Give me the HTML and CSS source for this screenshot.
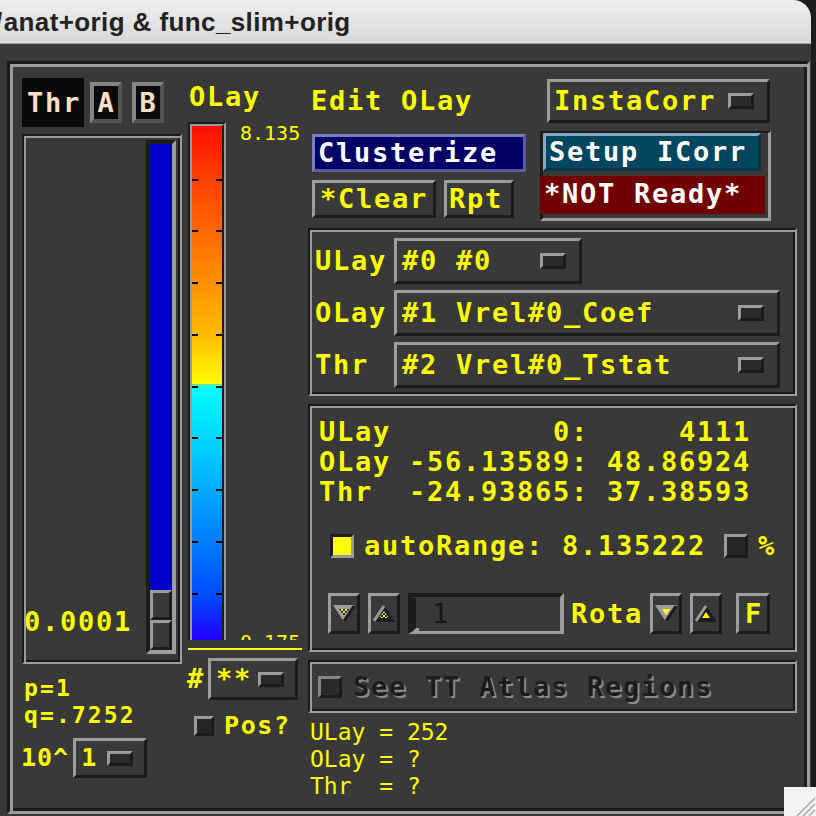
FILE: index.html
```html
<!DOCTYPE html>
<html>
<head>
<meta charset="utf-8">
<link rel="stylesheet" href="styles.css">
</head>
<body>
<div class="window">
  <div class="titlebar"><span class="cutchar">/</span>anat+orig &amp; func_slim+orig</div>
  <div class="frame">
    <div class="colA">
      <div class="thrrow">
        <div class="big thrbox">Thr</div>
        <div class="big ab ab-a">A</div>
        <div class="big ab ab-b">B</div>
      </div>
      <div class="etched2 slider">
        <div class="big thrval">0.0001</div>
        <div class="trough">
          <div class="fill"></div>
          <div class="thumb"></div>
          <div class="thumb"></div>
        </div>
      </div>
      <div class="pq"><div class="pqline">p=1</div><div class="pqline">q=.7252</div></div>
      <div class="powrow">
        <span class="mid pow">10^</span>
        <div class="dd dd-pow"><span class="mid">1</span><span class="ind"></span></div>
      </div>
    </div>

    <div class="colB">
      <div class="big olaylbl">OLay</div>
      <div class="cbrow">
        <div class="cbar"><div class="cbar-in"></div></div>
        <div class="cblabels"><span class="lbl-top">8.135</span><span class="lbl-bot">0.175</span></div>
      </div>
      <div class="yline"></div>
      <div class="hashrow">
        <span class="big hash">#</span>
        <div class="dd dd-hash"><span class="big">**</span><span class="ind"></span></div>
      </div>
      <div class="posrow"><span class="cb"></span><span class="mid poslbl">Pos?</span></div>
    </div>

    <div class="colC">
      <div class="row1">
        <span class="big editlbl">Edit OLay</span>
        <div class="btn insta"><span class="big">InstaCorr</span><span class="ind"></span></div>
      </div>
      <div class="row2">
        <div class="lsub">
          <div class="big clus">Clusterize</div>
          <div class="row3">
            <div class="btn big clear">*Clear</div>
            <div class="btn big rpt">Rpt</div>
          </div>
        </div>
        <div class="sframe">
          <div class="big setup">Setup ICorr</div>
          <div class="big notready">*NOT Ready*</div>
        </div>
      </div>
      <div class="etched2 chooser">
        <div class="crow"><span class="big clbl">ULay</span><div class="dd dd-u"><span class="big">#0 #0</span><span class="ind"></span></div></div>
        <div class="crow"><span class="big clbl">OLay</span><div class="dd dd-w"><span class="big">#1 Vrel#0_Coef</span><span class="ind"></span></div></div>
        <div class="crow"><span class="big clbl">Thr</span><div class="dd dd-w"><span class="big">#2 Vrel#0_Tstat</span><span class="ind"></span></div></div>
      </div>
      <div class="etched2 info">
        <div class="big ilines">ULay         0:     4111
OLay -56.13589: 48.86924
Thr  -24.93865: 37.38593</div>
        <div class="arow">
          <span class="cbon"></span>
          <span class="big artxt">autoRange: 8.135222</span>
          <span class="cboff"></span>
          <span class="big pct">%</span>
        </div>
        <div class="brow">
          <div class="btn ab2">
            <svg width="22" height="17" viewBox="0 0 22 17"><defs><pattern id="chk" width="4" height="4" patternUnits="userSpaceOnUse"><rect width="4" height="4" fill="#1b1b1b"/><rect width="2" height="2" fill="#ffff00"/><rect x="2" y="2" width="2" height="2" fill="#ffff00"/></pattern></defs><polygon points="0,0 22,0 11,17" fill="#9c9c9c"/><polyline points="21,1 11,16" stroke="#1b1b1b" stroke-width="3" fill="none"/><polygon points="6,4 16,4 11,11" fill="url(#chk)"/></svg>
          </div>
          <div class="btn ab2 gap8">
            <svg width="22" height="17" viewBox="0 0 22 17"><polygon points="11,0 22,17 0,17" fill="#1b1b1b"/><polyline points="11,1 1,16" stroke="#9c9c9c" stroke-width="3" fill="none"/><polygon points="11,6 16,13 6,13" fill="url(#chk)"/></svg>
          </div>
          <div class="tf"><span class="caret"></span><span class="tfval">1</span></div>
          <span class="big rota">Rota</span>
          <div class="btn ab2 gap7">
            <svg width="22" height="17" viewBox="0 0 22 17"><polygon points="0,0 22,0 11,17" fill="#9c9c9c"/><polyline points="21,1 11,16" stroke="#1b1b1b" stroke-width="3" fill="none"/><polygon points="7,4 15,4 11,10" fill="#ffff00"/></svg>
          </div>
          <div class="btn ab2 gap8">
            <svg width="22" height="17" viewBox="0 0 22 17"><polygon points="11,0 22,17 0,17" fill="#1b1b1b"/><polyline points="11,1 1,16" stroke="#9c9c9c" stroke-width="3" fill="none"/><polygon points="11,7 15,13 7,13" fill="#ffff00"/></svg>
          </div>
          <div class="btn big fbtn">F</div>
        </div>
      </div>
      <div class="etched2 atlas"><span class="cbdim"></span><span class="big atxt">See TT Atlas Regions</span></div>
      <div class="btext">ULay = 252
OLay = ?
Thr  = ?</div>
    </div>
  </div>
</div>
<svg class="grip" width="32" height="29" viewBox="0 0 32 29"><rect width="32" height="29" fill="#f3f3f3"/><line x1="31" y1="11" x2="13" y2="29" stroke="#a8a8a8" stroke-width="1.5"/><line x1="31" y1="17" x2="19" y2="29" stroke="#a8a8a8" stroke-width="1.5"/><line x1="31" y1="23" x2="25" y2="29" stroke="#a8a8a8" stroke-width="1.5"/></svg>
</body>
</html>
```

FILE: styles.css
```css
* { box-sizing: border-box; margin: 0; padding: 0; }
html, body { width: 816px; height: 816px; overflow: hidden; background: #1c1c1c; }
body { position: relative; font-family: "DejaVu Sans Mono", monospace; color: #ffff00; }

.window { position: relative; width: 811px; height: 816px; background: #393939; border-top-right-radius: 18px; overflow: hidden; }
.titlebar { height: 44px; background: linear-gradient(#eeeeee, #d8d8d8); border-bottom: 1px solid #a3a3a3; font: bold 26px/44px "Liberation Sans", Arial, sans-serif; color: #222; white-space: nowrap; letter-spacing: 0.4px; }
.cutchar { margin-left: -5px; margin-right: 1px; }

.frame { display: flex; width: 803px; height: 753px; margin: 17px 0 0 7px; padding: 3px; border: 3px solid; border-color: #1b1b1b #9c9c9c #9c9c9c #1b1b1b; box-shadow: inset 3px 3px 0 #9c9c9c, inset -3px -3px 0 #1b1b1b; }

.big { font-weight: bold; font-size: 27px; line-height: 30px; letter-spacing: 1.75px; white-space: pre; }
.mid { font-weight: bold; font-size: 25px; line-height: 26px; letter-spacing: 1px; white-space: pre; }

.etched2 { border: 2px solid; border-color: #1b1b1b #9c9c9c #9c9c9c #1b1b1b; box-shadow: inset 2px 2px 0 #9c9c9c, inset -2px -2px 0 #1b1b1b; padding: 2px; }
.btn { border: 3px solid; border-color: #9c9c9c #1b1b1b #1b1b1b #9c9c9c; }
.dd { display: flex; align-items: center; border: 3px solid; border-color: #9c9c9c #1b1b1b #1b1b1b #9c9c9c; padding-left: 5px; }
.ind { width: 26px; height: 16px; margin-left: auto; margin-right: 13px; border: 3px solid; border-color: #9c9c9c #1b1b1b #1b1b1b #9c9c9c; background: #2a2a2a; }

/* left column */
.colA { width: 171px; display: flex; flex-direction: column; padding-left: 9px; }
.thrrow { display: flex; align-items: center; height: 49px; margin-top: 11px; }
.thrbox { width: 62px; height: 49px; background: #0a0a0a; color: #ffe0c6; line-height: 49px; text-align: center; padding-left: 2px; }
.ab { width: 32px; height: 41px; border: 4px solid; border-color: #858585 #545454 #545454 #858585; background: #0a0a0a; color: #ffe0c6; line-height: 33px; text-align: center; padding-left: 1px; }
.ab-a { margin-left: 6px; }
.ab-b { margin-left: 10px; }

.slider { margin-top: 7px; width: 160px; height: 530px; display: flex; align-items: flex-start; }
.thrval { flex: 1; align-self: flex-end; margin: 0 0 23px -2px; }
.trough { width: 30px; height: 514px; margin: 2px 2px 0 0; border: 4px solid; border-color: #1b1b1b #9c9c9c #9c9c9c #1b1b1b; display: flex; flex-direction: column; }
.fill { height: 446px; background: #0000c8; }
.thumb { height: 30px; border: 3px solid; border-color: #9c9c9c #1b1b1b #1b1b1b #9c9c9c; background: #393939; }

.pq { margin: 11px 0 0 2px; }
.pqline { font-weight: bold; font-size: 23px; line-height: 27px; letter-spacing: 2.1px; white-space: pre; }
.powrow { display: flex; align-items: center; margin-top: 9px; height: 40px; }
.pow { margin-left: -1px; }
.dd-pow { width: 74px; height: 40px; margin-left: 4px; }
.dd-pow .ind { margin-right: 11px; height: 15px; }

/* colour bar column */
.colB { width: 120px; display: flex; flex-direction: column; }
.olaylbl { margin: 15px 0 0 5px; }
.cbrow { display: flex; height: 518px; margin-top: 10px; }
.cbar { width: 38px; height: 518px; margin-left: 4px; border-top: 2px solid #1b1b1b; border-left: 2px solid #1b1b1b; border-right: 2px solid #9c9c9c; }
.cbar-in { height: 100%; border-top: 2px solid #9c9c9c; border-left: 2px solid #9c9c9c; border-right: 2px solid #1b1b1b;
  background-image:
    repeating-linear-gradient(to bottom, transparent 0 49.75px, #000 49.75px 51.75px),
    repeating-linear-gradient(to bottom, transparent 0 49.75px, #000 49.75px 51.75px),
    linear-gradient(to bottom, #ff1000 0, #ff4000 53px, #ff6800 105px, #ff9000 157px, #ffba00 209px, #ffff00 258px, #60e8a0 258.5px, #60e8a0 260px, #00ffff 260px, #00d6ff 313px, #00aaff 365px, #007cff 417px, #004cff 469px, #1818ff 500px, #2000ff 514px);
  background-size: 6px 470px, 6px 470px, 100% 100%;
  background-position: left 0 top 2.5px, right 0 top 2.5px, 0 0;
  background-repeat: no-repeat; }
.cblabels { margin-left: 14px; height: 518px; overflow: hidden; display: flex; flex-direction: column; justify-content: space-between; font-size: 20px; line-height: 20px; }
.lbl-top { margin-top: 1px; }
.lbl-bot { margin-bottom: -12px; }
.yline { width: 114px; height: 2px; margin: 8px 0 0 4px; background: #ffff00; }
.hashrow { display: flex; align-items: center; height: 42px; margin-top: 8px; }
.hash { margin-left: 3px; }
.dd-hash { width: 90px; height: 42px; margin-left: 3px; }
.dd-hash .ind { margin-right: 11px; height: 15px; }
.posrow { display: flex; align-items: center; height: 20px; margin-top: 16px; }
.cb { width: 20px; height: 20px; margin-left: 10px; border: 3px solid; border-color: #9c9c9c #1b1b1b #1b1b1b #9c9c9c; background: #262626; }
.poslbl { margin-left: 10px; letter-spacing: 1.6px; }

/* right column */
.colC { width: 489px; margin-left: 4px; display: flex; flex-direction: column; }
.row1 { display: flex; align-items: center; height: 44px; margin-top: 12px; }
.editlbl { margin-left: 3px; }
.insta { margin-left: auto; margin-right: 27px; width: 223px; height: 44px; display: flex; align-items: center; padding-left: 4px; }
.row2 { display: flex; height: 90px; margin-top: 8px; }
.lsub { width: 214px; margin-left: 4px; display: flex; flex-direction: column; }
.clus { margin-top: 3px; height: 38px; background: #000066; color: #ffffff; border: 3px solid; border-color: #7c7cc2 #5c5c9e #5c5c9e #7c7cc2; padding-left: 3px; line-height: 31px; }
.row3 { display: flex; gap: 8px; margin-top: 8px; }
.clear { width: 124px; height: 38px; padding-left: 5px; line-height: 31px; }
.rpt { width: 70px; height: 38px; padding-left: 2px; line-height: 31px; }
.sframe { margin-left: auto; margin-right: 26px; width: 231px; height: 90px; border-style: solid; border-width: 2px 3px 3px 3px; border-color: #1b1b1b #9c9c9c #9c9c9c #1b1b1b; }
.setup { width: 218px; height: 38px; background: #00465f; color: #ffffff; border: 3px solid; border-color: #88a8c2 #0b3448 #0b3448 #88a8c2; padding-left: 3px; line-height: 31px; }
.notready { width: 225px; height: 38px; margin: 5px 0 0 -3px; background: #700000; color: #ffffff; padding-left: 4px; line-height: 36px; }

.chooser { height: 168px; margin-top: 7px; padding-top: 8px; display: flex; flex-direction: column; gap: 6px; }
.crow { display: flex; align-items: center; height: 46px; }
.clbl { width: 82px; padding-left: 3px; }
.dd-u { width: 188px; height: 46px; }
.dd-w { width: 386px; height: 46px; }

.info { height: 248px; margin-top: 8px; }
.ilines { margin: 9px 0 0 7px; }
.arow { display: flex; align-items: center; height: 24px; margin-top: 27px; padding-left: 18px; }
.cbon { width: 24px; height: 24px; border: 3px solid; border-color: #1b1b1b #9c9c9c #9c9c9c #1b1b1b; background: #ffff00; }
.artxt { margin-left: 10px; }
.cboff { width: 24px; height: 24px; margin-left: 18px; border: 3px solid; border-color: #9c9c9c #1b1b1b #1b1b1b #9c9c9c; background: #262626; }
.pct { margin-left: 10px; }
.brow { display: flex; align-items: center; height: 41px; margin-top: 35px; padding-left: 16px; }
.ab2 { width: 32px; height: 41px; display: flex; align-items: center; justify-content: center; }
.gap8 { margin-left: 8px; }
.gap7 { margin-left: 7px; }
.tf { width: 156px; height: 41px; margin-left: 8px; border-style: solid; border-width: 4px 4px 3px 5px; border-color: #1b1b1b #9c9c9c #9c9c9c #1b1b1b; display: flex; align-items: center; }
.caret { width: 6px; height: 33px; border-left: 3px solid #1b1b1b; border-bottom: 3px solid #9c9c9c; }
.tfval { margin-left: 13px; font-size: 27px; line-height: 30px; color: #151515; }
.rota { margin-left: 7px; }
.fbtn { width: 34px; height: 41px; margin-left: 14px; text-align: center; line-height: 35px; padding-left: 2px; }

.atlas { height: 53px; margin-top: 8px; display: flex; align-items: center; padding-left: 8px; }
.cbdim { width: 24px; height: 22px; border: 3px solid; border-color: #858585 #1b1b1b #1b1b1b #858585; background: #2a2a2a; }
.atxt { margin-left: 11px; color: #1c1c1c; text-shadow: 2px 2px 0 #8a8a8a; }

.btext { margin: 6px 0 0 2px; font-size: 23px; line-height: 27px; white-space: pre; }

.grip { position: absolute; right: 0; bottom: 0; }
```
